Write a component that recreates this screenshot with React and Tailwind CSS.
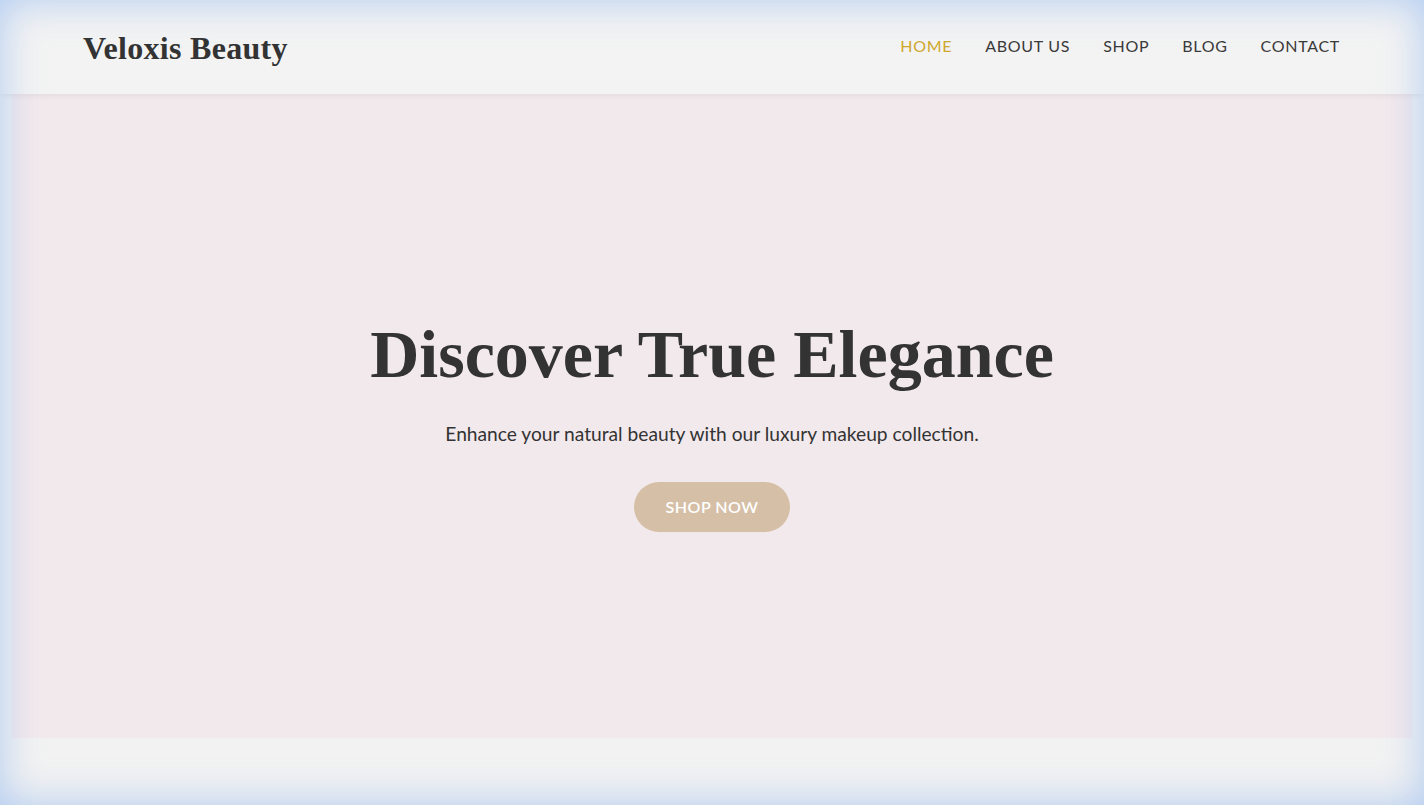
import React from "react";

const serif = { fontFamily: '"Liberation Serif", "DejaVu Serif", serif' };

export default function App() {
  const links = ["HOME", "ABOUT US", "SHOP", "BLOG", "CONTACT"];
  return (
    <div
      className="relative min-h-screen bg-[#f2f2f2] text-[#333]"
      style={{ fontFamily: 'Lato, "Open Sans", sans-serif' }}
    >
      <header className="relative z-10 flex h-[94px] items-center justify-between bg-[#f3f3f3] pl-[83px] pr-[84px] shadow-[0_2px_6px_rgba(0,0,0,0.06)]">
        <div className="pt-[2px] text-[32px] font-bold tracking-[0.3px] text-[#333]" style={serif}>
          Veloxis Beauty
        </div>
        <nav className="flex items-center gap-[33px] pb-[2px] text-[16px] tracking-[0.7px]">
          {links.map((l, i) => (
            <a
              key={l}
              href="#"
              className={i === 0 ? "text-[#cfa82e]" : "text-[#3a3a3a]"}
            >
              {l}
            </a>
          ))}
        </nav>
      </header>

      <section className="mx-3 flex h-[644px] flex-col items-center justify-center bg-[#f2e9ec] pt-[20px]">
        <h1 className="text-[68px] font-bold leading-none text-[#333]" style={serif}>
          Discover True Elegance
        </h1>
        <p className="mt-[32px] text-[19.2px] text-[#333]">
          Enhance your natural beauty with our luxury makeup collection.
        </p>
        <button className="mt-[34px] h-[50px] w-[156px] rounded-full bg-[#d6bfa7] text-[16px] font-semibold tracking-[0.5px] text-white">
          SHOP NOW
        </button>
      </section>

      <div className="h-[67px]" />

      <div className="pointer-events-none fixed inset-0 z-50 shadow-[inset_0_0_40px_rgba(130,175,240,0.6)]" />
    </div>
  );
}
